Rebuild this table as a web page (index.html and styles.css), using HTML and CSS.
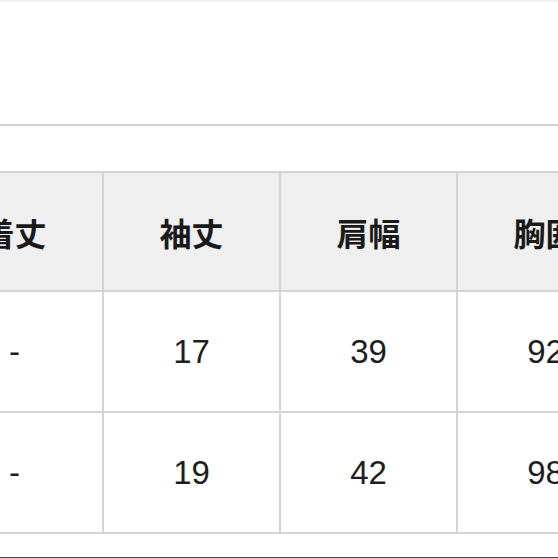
FILE: index.html
```html
<!DOCTYPE html>
<html lang="ja">
<head>
<meta charset="utf-8">
<title>サイズ表</title>
<link rel="stylesheet" href="styles.css">
</head>
<body>
<div class="page">
  <div class="topbar"></div>
  <div class="table-wrap">
    <table class="size-table">
      <colgroup>
        <col class="col"><col class="col"><col class="col"><col class="col">
      </colgroup>
      <thead>
        <tr>
          <th>着丈</th>
          <th>袖丈</th>
          <th>肩幅</th>
          <th>胸囲</th>
        </tr>
      </thead>
      <tbody>
        <tr>
          <td>-</td>
          <td>17</td>
          <td>39</td>
          <td>92</td>
        </tr>
        <tr>
          <td>-</td>
          <td>19</td>
          <td>42</td>
          <td>98</td>
        </tr>
      </tbody>
    </table>
  </div>
  <div class="bottom"></div>
</div>
</body>
</html>
```

FILE: styles.css
```css
html, body {
  margin: 0;
  padding: 0;
  background: #ffffff;
}

body {
  width: 558px;
  height: 558px;
  overflow: hidden;
  font-family: "Liberation Sans", "Noto Sans CJK JP", sans-serif;
  color: #1c1c1c;
}

.page {
  display: flex;
  flex-direction: column;
  height: 558px;
}

.topbar {
  flex: none;
  height: 126px;
  box-sizing: border-box;
  background: linear-gradient(to bottom, #efefef 0px, #ffffff 3px);
  border-bottom: 2px solid #d2d2d2;
}

.table-wrap {
  flex: none;
  overflow: hidden;
  margin-top: 45px;
}

.size-table {
  border-collapse: collapse;
  table-layout: fixed;
  width: 708px;
  margin-left: -75px;
}

.col {
  width: 177px;
}

.size-table th,
.size-table td {
  border: 2px solid #d4d4d4;
  text-align: center;
  vertical-align: middle;
  padding: 0;
}

.size-table th {
  background: #efefef;
  height: 117px;
  font-family: "Noto Sans CJK JP", sans-serif;
  font-weight: 700;
  font-size: 32px;
  color: #1a1a1a;
}

.size-table td {
  height: 119px;
  font-size: 33px;
  font-weight: 400;
  color: #1e1e1e;
}

.bottom {
  flex: 1;
  border-bottom: 1px solid #4a4a4a;
}
```
